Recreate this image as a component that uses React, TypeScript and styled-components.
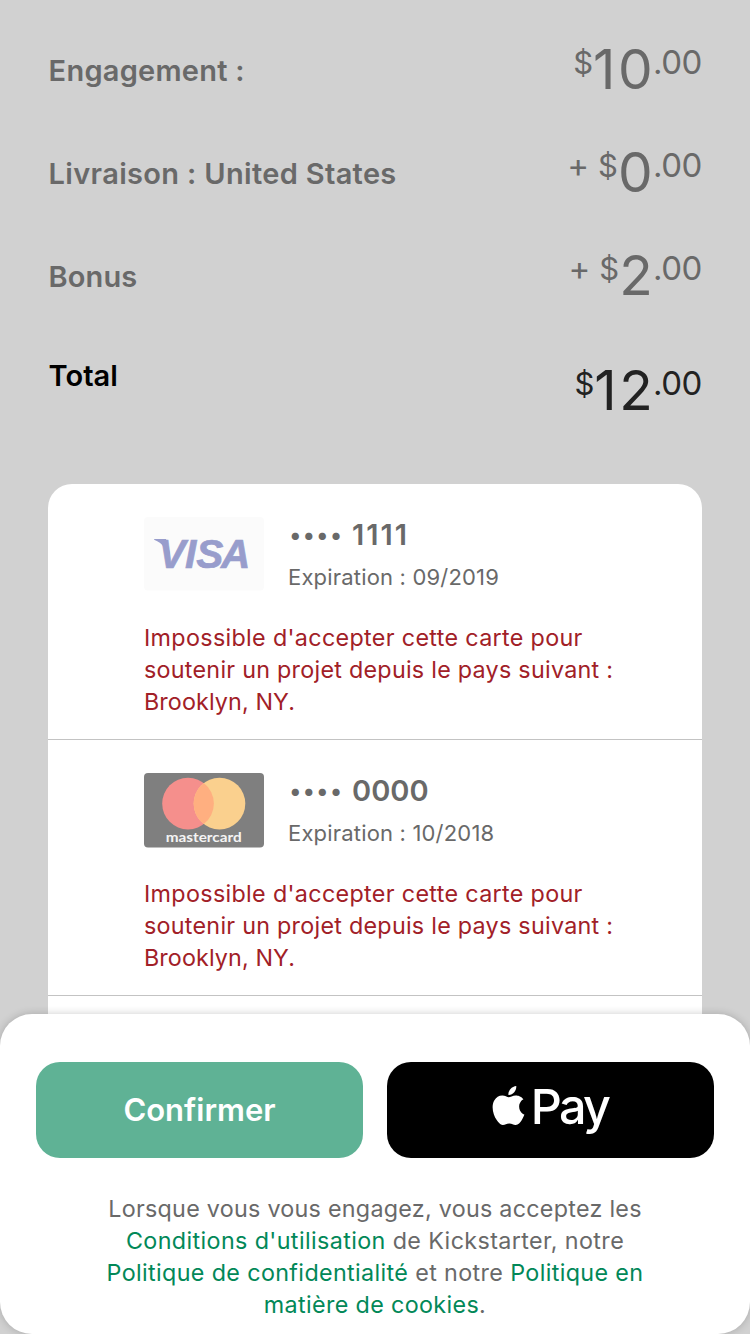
import React from "react";
import styled, { createGlobalStyle } from "styled-components";
import { SiApple } from "react-icons/si";

const GlobalStyle = createGlobalStyle`
  *, *::before, *::after { box-sizing: border-box; }
  body {
    margin: 0;
    background: #d1d1d1;
    color: #696969;
    font-family: Inter, "Liberation Sans", sans-serif;
  }
`;

const Screen = styled.main`
  display: flex;
  flex-direction: column;
  width: 750px;
  height: 1334px;
  overflow: hidden;
  background: #d1d1d1;
`;

const Summary = styled.section`
  flex: none;
  height: 484px;
  padding: 19px 48px 0 48.6px;
`;

const SummaryRow = styled.div<{ $total?: boolean }>`
  display: flex;
  justify-content: space-between;
  align-items: flex-start;
  height: 103px;
  padding-top: ${(p) => (p.$total ? 29 : 30)}px;
  color: ${(p) => (p.$total ? "#222" : "#696969")};
`;

const Label = styled.span<{ $total?: boolean; $spacing?: number }>`
  margin-top: ${(p) => (p.$total ? 0 : 3)}px;
  font-size: 29px;
  line-height: 38px;
  font-weight: 600;
  letter-spacing: ${(p) => p.$spacing ?? 0}px;
  color: ${(p) => (p.$total ? "#000" : "inherit")};
`;

const Amount = styled.span<{ $total?: boolean }>`
  display: flex;
  align-items: flex-start;
  margin-top: ${(p) => (p.$total ? 13 : 0)}px;
`;

const Plus = styled.span`
  margin: 1px 9px 0 0;
  font-size: 33px;
  line-height: 24px;
`;

const Currency = styled.span`
  margin-top: 2px;
  font-size: 31px;
  line-height: 24px;
`;

const Whole = styled.span`
  font-size: 55px;
  line-height: 40px;
  letter-spacing: 2.5px;
`;

const Cents = styled.span`
  margin: 1px 0 0 -2.3px;
  font-size: 33px;
  line-height: 24px;
  letter-spacing: -0.4px;
`;

const CardList = styled.section`
  flex: none;
  width: 654px;
  height: 530px;
  margin-left: 48px;
  border-radius: 24px 24px 0 0;
  background: #fff;
`;

const CardItem = styled.article`
  height: 256px;
  padding: 33px 40px 0 96px;
  border-bottom: 1px solid #c3c3c3;
`;

const CardHead = styled.div`
  display: flex;
  gap: 24px;
  height: 105px;
`;

const CardArt = styled.svg`
  flex: none;
  width: 120px;
  height: 75px;
`;

const CardInfo = styled.div`
  display: flex;
  flex-direction: column;
`;

const CardNumber = styled.div`
  display: flex;
  align-items: center;
  height: 34px;
  font-size: 29px;
  font-weight: 600;
`;

const Dots = styled.span`
  width: 64px;
  padding: 2px 0 0 1.4px;
  font-size: 23px;
  letter-spacing: 2px;
  white-space: nowrap;
`;

const LastDigits = styled.span<{ $spacing: number }>`
  letter-spacing: ${(p) => p.$spacing}px;
`;

const Expiry = styled.span`
  margin-top: 11px;
  font-size: 22px;
  line-height: 30px;
  letter-spacing: 0.18px;
`;

const ErrorText = styled.div`
  color: #a12027;
`;

const Legal = styled.div`
  display: flex;
  flex-direction: column;
  align-items: center;
  margin-top: 35px;
`;

const Line = styled.div<{ $spacing: number }>`
  font-size: 23.3px;
  line-height: 32px;
  letter-spacing: ${(p) => p.$spacing}px;
  white-space: nowrap;
`;

const Sheet = styled.footer`
  flex: none;
  position: relative;
  height: 320px;
  padding: 48px 36px 0;
  border-radius: 32px;
  background: #fff;
  box-shadow: 0 0 9px rgba(0, 0, 0, 0.2);
`;

const Actions = styled.div`
  display: flex;
  gap: 24px;
`;

const Button = styled.button<{ $dark?: boolean }>`
  display: flex;
  flex: 1;
  align-items: center;
  justify-content: center;
  height: 96px;
  padding: 0 0 ${(p) => (p.$dark ? 9 : 2)}px;
  border: 0;
  border-radius: 24px;
  background: ${(p) => (p.$dark ? "#000" : "#5fb295")};
  color: #fff;
  font-family: inherit;
  font-size: 31px;
  font-weight: 600;
`;

const PayWord = styled.span`
  margin: 2px 4px 0 3px;
  font-size: 48.5px;
  line-height: 60px;
  font-weight: 500;
  letter-spacing: -2.7px;
`;

const Link = styled.a`
  color: #028858;
`;

function Price({ plus, whole, total }: { plus?: boolean; whole: string; total?: boolean }) {
  return (
    <Amount $total={total}>
      {plus && <Plus>+</Plus>}
      <Currency>$</Currency>
      <Whole>{whole}</Whole>
      <Cents>.00</Cents>
    </Amount>
  );
}

function VisaArt() {
  return (
    <CardArt viewBox="0 0 120 75">
      <rect width="120" height="73.5" rx="4" fill="#fbfbfb" />
      <g fill="#989dcc">
        <path d="M10 22.8 L10.4 22 H22 L26 36 L24.5 44 L20.5 31 Q17 25.2 10 22.8 Z" />
        <text
          x="14.5 41 52.3 77"
          y="51"
          fontFamily="'Liberation Sans', sans-serif"
          fontSize="40.5"
          fontWeight="700"
          fontStyle="italic"
          stroke="#989dcc"
          strokeWidth="0.7"
        >
          VISA
        </text>
      </g>
    </CardArt>
  );
}

function MastercardArt() {
  return (
    <CardArt viewBox="0 0 120 75">
      <rect width="120" height="74.5" rx="4" fill="#7f7f7f" />
      <circle cx="44" cy="30.6" r="25.8" fill="#f58f8c" />
      <circle cx="75.5" cy="30.6" r="25.8" fill="#fad08e" />
      <path d="M59.75 10.1 A25.8 25.8 0 0 1 59.75 51.1 A25.8 25.8 0 0 1 59.75 10.1 Z" fill="#ffaf80" />
      <text
        x="21.7"
        y="69.3"
        textLength="76"
        lengthAdjust="spacingAndGlyphs"
        fontFamily="Lato, sans-serif"
        fontSize="14"
        fontWeight="700"
        fill="#f4f4f4"
      >
        mastercard
      </text>
    </CardArt>
  );
}

function SavedCard({ art, digits, digitSpacing = 0, expiry }: {
  art: React.ReactNode;
  digits: string;
  digitSpacing?: number;
  expiry: string;
}) {
  return (
    <CardItem>
      <CardHead>
        {art}
        <CardInfo>
          <CardNumber>
            <Dots>••••</Dots>
            <LastDigits $spacing={digitSpacing}>{digits}</LastDigits>
          </CardNumber>
          <Expiry>Expiration : {expiry}</Expiry>
        </CardInfo>
      </CardHead>
      <ErrorText>
        <Line $spacing={0.34}>Impossible d'accepter cette carte pour</Line>
        <Line $spacing={0.27}>soutenir un projet depuis le pays suivant :</Line>
        <Line $spacing={0.12}>Brooklyn, NY.</Line>
      </ErrorText>
    </CardItem>
  );
}

export default function App() {
  return (
    <Screen>
      <GlobalStyle />
      <Summary>
        <SummaryRow>
          <Label $spacing={0.25}>Engagement :</Label>
          <Price whole="10" />
        </SummaryRow>
        <SummaryRow>
          <Label $spacing={0.33}>Livraison : United States</Label>
          <Price plus whole="0" />
        </SummaryRow>
        <SummaryRow>
          <Label $spacing={0.1}>Bonus</Label>
          <Price plus whole="2" />
        </SummaryRow>
        <SummaryRow $total>
          <Label $total>Total</Label>
          <Price total whole="12" />
        </SummaryRow>
      </Summary>
      <CardList>
        <SavedCard art={<VisaArt />} digits="1111" digitSpacing={2} expiry="09/2019" />
        <SavedCard art={<MastercardArt />} digits="0000" expiry="10/2018" />
      </CardList>
      <Sheet>
        <Actions>
          <Button>Confirmer</Button>
          <Button $dark aria-label="Apple Pay">
            <SiApple size={39} />
            <PayWord>Pay</PayWord>
          </Button>
        </Actions>
        <Legal>
          <Line $spacing={0.27}>Lorsque vous vous engagez, vous acceptez les</Line>
          <Line $spacing={0.39}>
            <Link>Conditions d'utilisation</Link> de Kickstarter, notre
          </Line>
          <Line $spacing={0.37}>
            <Link>Politique de confidentialité</Link> et notre <Link>Politique en</Link>
          </Line>
          <Line $spacing={0.36}>
            <Link>matière de cookies</Link>.
          </Line>
        </Legal>
      </Sheet>
    </Screen>
  );
}
